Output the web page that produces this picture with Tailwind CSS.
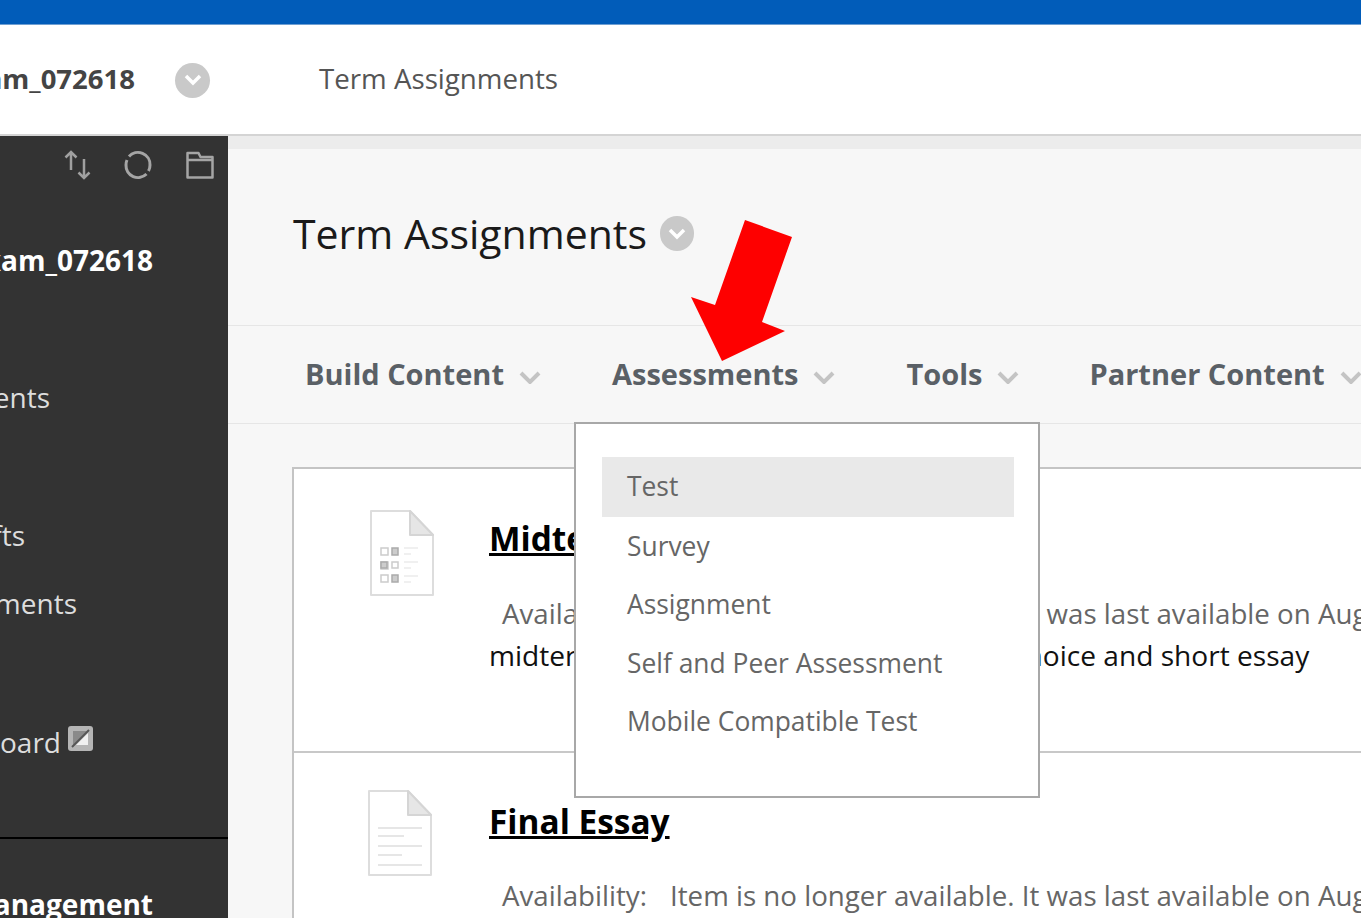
<!DOCTYPE html>
<html lang="en">
<head>
    <meta charset="UTF-8">
    <title>Term Assignments</title>
    <script src="https://cdn.jsdelivr.net/npm/@tailwindcss/browser@4"></script>
</head>
<body class="bg-white font-['Open_Sans',sans-serif] overflow-hidden">
<div class="relative w-[1361px] h-[918px] overflow-hidden flex flex-col">
    <!-- top bar -->
    <div class="h-[25px] shrink-0 bg-[#015cb9] border-b border-[#6f9fd2]"></div>

    <!-- breadcrumb header -->
    <div class="h-[111px] shrink-0 bg-white border-b-2 border-[#d4d4d4] flex items-center pt-[1px]">
        <div class="w-[135px] -mt-[2px] flex justify-end text-[27.500px] font-bold text-[#444] whitespace-nowrap">Exam_072618</div>
        <div class="ml-[40px] w-[35px] h-[35px] rounded-full bg-[#c9c9c9] flex items-center justify-center">
            <svg width="20" height="14" viewBox="0 0 20 14" fill="none"><path d="M3 3l7 7 7-7" stroke="#fff" stroke-width="3.500"/></svg>
        </div>
        <div class="ml-[109px] -mt-[2px] text-[27.700px] text-[#555] whitespace-nowrap">Term Assignments</div>
    </div>

    <div class="flex flex-1 min-h-0">
        <!-- course menu -->
        <div class="w-[228px] shrink-0 bg-[#333] flex flex-col overflow-hidden text-[28px] leading-[34px] text-[#ddd]">
            <div class="h-[58px] shrink-0 flex items-center justify-end pr-[14px] pb-[1px]">
                <svg width="32" height="32" viewBox="0 0 32 32" fill="none" stroke="#a0a0a0" stroke-width="2.500"><path d="M9 21V3M3.500 8.500L9 3l5.500 5.500M22 10v19M16.500 23.500L22 29l5.500-5.500"/></svg>
                <svg class="ml-[29px]" width="30" height="30" viewBox="0 0 30 30" fill="none" stroke="#a5a5a5" stroke-width="3"><path d="M6 6.500A12 12 0 0 1 27 15a12 12 0 0 1-1.500 6M23.500 24A12 12 0 0 1 3 15a12 12 0 0 1 1-5"/></svg>
                <svg class="ml-[33px]" width="28" height="28" viewBox="0 0 28 28" fill="none" stroke="#a5a5a5" stroke-width="2.500" stroke-linejoin="round"><path d="M1.500 26.500V2h11l2 4h12v20.500zM1.500 9h25"/></svg>
            </div>
            <div class="mt-[49px] w-[153px] flex justify-end whitespace-nowrap font-bold text-white text-[28px]">Exam_072618</div>
            <div class="mt-[103px] w-[50px] flex justify-end whitespace-nowrap">Contents</div>
            <div class="mt-[104px] w-[25px] flex justify-end whitespace-nowrap">Drafts</div>
            <div class="mt-[34px] w-[77px] flex justify-end whitespace-nowrap">Assignments</div>
            <div class="mt-[105px] flex">
                <div class="w-[61px] flex justify-end whitespace-nowrap">Discussion Board</div>
                <div class="ml-[7px] mt-[1px] w-[25px] h-[25px] rounded-[3px] bg-[#b5b5b5] overflow-hidden">
                    <svg width="25" height="25" viewBox="0 0 25 25"><path d="M5 19L19 5H5z" fill="#8a8a8a"/><path d="M8 19L20 7v12z" fill="#f0f0f0"/><path d="M4 21L21 4" stroke="#555" stroke-width="2"/></svg>
                </div>
            </div>
            <div class="mt-[78px] h-[2px] shrink-0 bg-black"></div>
            <div class="mt-[48px] w-[153px] flex justify-end whitespace-nowrap font-bold text-white text-[28px]">Course Management</div>
        </div>

        <!-- content area -->
        <div class="flex-1 min-w-0 bg-[#f7f7f7] flex flex-col">
            <div class="h-[13px] shrink-0 bg-[#ececec]"></div>
            <div class="h-[177px] shrink-0 border-b border-[#e6e6e6] pl-[65px] pt-[57px] flex items-start gap-[13px]">
                <h1 class="text-[41px] leading-[54px] text-[#1a1a1a] whitespace-nowrap">Term Assignments</h1>
                <div class="mt-[10px] w-[34px] h-[35px] rounded-full bg-[#c9c9c9] flex items-center justify-center">
                    <svg width="20" height="14" viewBox="0 0 20 14" fill="none"><path d="M3 3l7 7 7-7" stroke="#fff" stroke-width="3.500"/></svg>
                </div>
            </div>
            <div class="h-[98px] shrink-0 border-b border-[#e6e6e6] flex items-center pl-[77px] pb-[2px] text-[29px] font-bold text-[#5a6066] whitespace-nowrap">
                <span>Build Content</span>
                <svg class="ml-[15px] mt-[6px] shrink-0" width="22" height="14" viewBox="0 0 22 14" fill="none"><path d="M2 3l9 9 9-9" stroke="#c4c4c4" stroke-width="4"/></svg>
                <span class="ml-[71px]">Assessments</span>
                <svg class="ml-[15px] mt-[6px] shrink-0" width="22" height="14" viewBox="0 0 22 14" fill="none"><path d="M2 3l9 9 9-9" stroke="#c4c4c4" stroke-width="4"/></svg>
                <span class="ml-[71px]">Tools</span>
                <svg class="ml-[15px] mt-[6px] shrink-0" width="22" height="14" viewBox="0 0 22 14" fill="none"><path d="M2 3l9 9 9-9" stroke="#c4c4c4" stroke-width="4"/></svg>
                <span class="ml-[70px]">Partner Content</span>
                <svg class="ml-[15px] mt-[6px] shrink-0" width="22" height="14" viewBox="0 0 22 14" fill="none"><path d="M2 3l9 9 9-9" stroke="#c4c4c4" stroke-width="4"/></svg>
            </div>

            <!-- content list -->
            <div class="ml-[64px] mt-[43px] bg-white border-l-2 border-t-2 border-[#c4c4c4] flex-1 flex flex-col min-w-0 text-[27.700px] leading-[34px] whitespace-nowrap overflow-hidden">
                <div class="h-[284px] shrink-0 border-b-2 border-[#c8c8c8] flex">
                    <div class="w-[195px] shrink-0 pl-[75px] pt-[40px]">
                        <svg width="66" height="88" viewBox="0 0 66 88" fill="none">
                            <path d="M2 2h39l23 24v60H2z" fill="#fff" stroke="#ddd" stroke-width="2" stroke-linejoin="round"/>
                            <path d="M41 2v24h23z" fill="#e6e6e6" stroke="#d5d5d5" stroke-width="2" stroke-linejoin="round"/>
                            <g stroke="#ccc" stroke-width="1.500"><path d="M12 39h7v7h-7zM12 53h7v7h-7zM12 66h7v7h-7zM23 53h6v6h-6z"/></g>
                            <g fill="#ccc" stroke="#aaa" stroke-width="1.500"><path d="M23 39h6v7h-6zM12 53h6v6h-6zM23 66h6v7h-6z"/></g>
                            <path d="M35 39h14M35 45h7M35 53h14M35 59h7M35 67h14M35 73h7" stroke="#ececec" stroke-width="1.500"/>
                        </svg>
                    </div>
                    <div class="min-w-0">
                        <h2 class="mt-[47px] text-[33.400px] leading-[44px] font-bold underline text-black">Midterm Exam</h2>
                        <div class="mt-[36px] ml-[13px] text-[#666]"><span>Availability:</span><span class="ml-[23px]">Item is no longer available. It was last available on Aug</span></div>
                        <div class="mt-[8px] text-[28.100px] text-[#111]">midterm exam is a mix of both multiple choice and short essay</div>
                    </div>
                </div>
                <div class="flex flex-1 min-h-0">
                    <div class="w-[195px] shrink-0 pl-[73px] pt-[36px]">
                        <svg width="66" height="88" viewBox="0 0 66 88" fill="none">
                            <path d="M2 2h39l23 24v60H2z" fill="#fff" stroke="#ddd" stroke-width="2" stroke-linejoin="round"/>
                            <path d="M41 2v24h23z" fill="#e6e6e6" stroke="#d5d5d5" stroke-width="2" stroke-linejoin="round"/>
                            <path d="M11 39h44M11 47h26M11 57h44M11 66h24M11 76h44" stroke="#e6e6e6" stroke-width="2"/>
                        </svg>
                    </div>
                    <div class="min-w-0">
                        <h2 class="mt-[46px] text-[33.400px] leading-[44px] font-bold underline text-black">Final Essay</h2>
                        <div class="mt-[35px] ml-[13px] text-[#666]"><span>Availability:</span><span class="ml-[23px]">Item is no longer available. It was last available on Aug</span></div>
                    </div>
                </div>
            </div>
        </div>
    </div>

    <!-- assessments dropdown -->
    <div class="absolute left-[574px] top-[422px] w-[466px] h-[376px] bg-white border-2 border-[#a8a8a8] pl-[26px] pr-[24px] pt-[33px] text-[26.400px] text-[#666] leading-[34px]">
        <div class="h-[60px] bg-[#e9e9e9] px-[25px] pb-[3px] flex items-center">Test</div>
        <div class="h-[59px] px-[25px] pb-[1px] flex items-center">Survey</div>
        <div class="h-[58px] px-[25px] pb-[3px] flex items-center">Assignment</div>
        <div class="h-[60px] px-[25px] pb-[3px] flex items-center">Self and Peer Assessment</div>
        <div class="h-[58px] px-[25px] pb-[5px] flex items-center">Mobile Compatible Test</div>
    </div>

    <!-- red callout arrow -->
    <svg class="absolute left-[680px] top-[210px]" width="120" height="160" viewBox="680 210 120 160">
        <polygon points="745,220 792,237 762,322 785,331 722,361 691,297 715,305" fill="#fe0000"/>
    </svg>
</div>
</body>
</html>
